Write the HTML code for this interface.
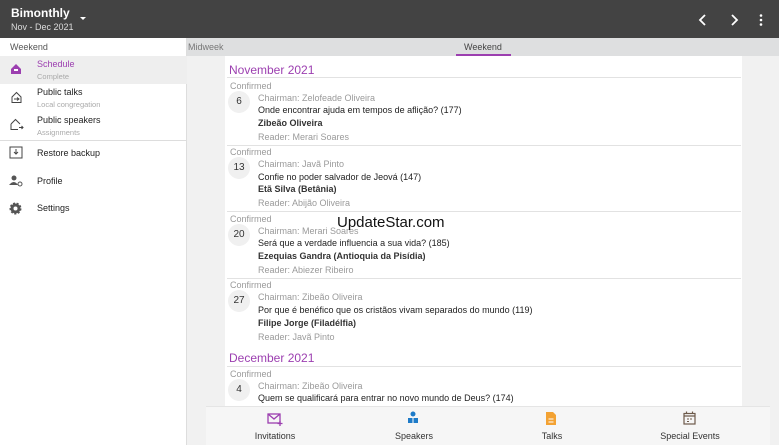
<!DOCTYPE html><html><head><style>
*{margin:0;padding:0;box-sizing:border-box}
body{width:779px;height:445px;overflow:hidden;background:#f1f1f1;font-family:"Liberation Sans",sans-serif;position:relative}
.a{position:absolute;white-space:nowrap}
.top{left:0;top:0;width:779px;height:38px;background:#434343}
.side{left:0;top:38px;width:187px;height:407px;background:#fff;border-right:1px solid #ddd}
.tabs{left:187px;top:38px;width:592px;height:18px;background:#dedfe0}
.card{left:225px;top:56px;width:517px;height:350px;background:#fff}
.g{color:#9a9a9a;font-size:9px}
.t{color:#222;font-size:9px}
.b{color:#333;font-size:9px;font-weight:bold}
.circ{width:22px;height:22px;border-radius:50%;background:#f0f0f0;font-size:10px;color:#333;text-align:center;line-height:22px}
.sep{height:1px;background:#e2e2e2;left:227px;width:514px}
.mon{color:#9c3fb0;font-size:12px;left:229px}
.nav{left:206px;top:406px;width:564px;height:39px;background:#f6f6f6;border-top:1px solid #e5e5e5}
.nl{font-size:9px;color:#333;top:431px;transform:translateX(-50%)}
.si{font-size:9px;color:#222;left:37px}
.ss{font-size:7.5px;color:#aaa;left:37px}
</style></head><body>
<div class="a top"></div>
<div class="a" style="left:11px;top:6px;color:#fff;font-size:12px;font-weight:bold">Bimonthly</div>
<div class="a" style="left:11px;top:22px;color:#ddd;font-size:9px">Nov - Dec 2021</div>
<div class="a" style="left:80px;top:17px;width:0;height:0;border-left:3px solid transparent;border-right:3px solid transparent;border-top:3px solid #fff"></div>
<svg class="a" style="left:695px;top:13px" width="80" height="14"><path d="M10 2 L5 7 L10 12" stroke="#fff" stroke-width="1.8" fill="none"/><path d="M37 2 L42 7 L37 12" stroke="#fff" stroke-width="1.8" fill="none"/><circle cx="66" cy="2.5" r="1.3" fill="#fff"/><circle cx="66" cy="7" r="1.3" fill="#fff"/><circle cx="66" cy="11.5" r="1.3" fill="#fff"/></svg>
<div class="a side"></div>
<div class="a" style="left:10px;top:42px;font-size:9px;color:#555">Weekend</div>
<div class="a" style="left:0;top:56px;width:187px;height:28px;background:#eee"></div>
<svg class="a" style="left:10px;top:63px" width="12" height="12"><path d="M6 1 L11 6 V11 H1 V6 Z" fill="#9c3fb0"/><rect x="4" y="6" width="4" height="2" fill="#fff"/></svg>
<div class="a si" style="top:59px;color:#9c3fb0">Schedule</div>
<div class="a ss" style="top:72px">Complete</div>
<svg class="a" style="left:10px;top:91px" width="13" height="13" fill="none" stroke="#444" stroke-width="1"><path d="M2 6 L6.5 1.5 L11 6 V11.5 H2 Z"/><path d="M4 8 H9 M7 6.5 L9 8 L7 9.5"/></svg>
<div class="a si" style="top:87px">Public talks</div>
<div class="a ss" style="top:100px">Local congregation</div>
<svg class="a" style="left:9px;top:118px" width="15" height="13" fill="none" stroke="#444" stroke-width="1"><path d="M2 6 L6.5 1.5 L11 6 M2 6 V11.5 H9 M10 9.5 H14 M12.5 8 L14 9.5 L12.5 11"/></svg>
<div class="a si" style="top:115px">Public speakers</div>
<div class="a ss" style="top:128px">Assignments</div>
<div class="a" style="left:0;top:140px;width:187px;height:1px;background:#ddd"></div>
<svg class="a" style="left:9px;top:146px" width="14" height="13" fill="none" stroke="#444" stroke-width="1"><rect x="1" y="1" width="12" height="11"/><path d="M7 3 V8 M5 6 L7 8 L9 6"/></svg>
<div class="a si" style="top:148px">Restore backup</div>
<svg class="a" style="left:9px;top:175px" width="14" height="12"><circle cx="5" cy="3" r="2.5" fill="#555"/><path d="M0 10 Q5 4 9 10 Z" fill="#555"/><circle cx="11" cy="9" r="2" fill="none" stroke="#555" stroke-width="1"/></svg>
<div class="a si" style="top:176px">Profile</div>
<svg class="a" style="left:9px;top:202px" width="13" height="13"><circle cx="6.5" cy="6.5" r="5" fill="#555" stroke="#555" stroke-width="2" stroke-dasharray="2 1.5"/><circle cx="6.5" cy="6.5" r="2" fill="#fff"/></svg>
<div class="a si" style="top:203px">Settings</div>
<div class="a tabs"></div>
<div class="a" style="left:188px;top:42px;font-size:9px;color:#777">Midweek</div>
<div class="a" style="left:464px;top:42px;font-size:9px;color:#444">Weekend</div>
<div class="a" style="left:456px;top:54px;width:55px;height:2px;background:#9c3fb0"></div>
<div class="a card"></div>
<div class="a mon" style="top:63px">November 2021</div>
<div class="a sep" style="top:77px"></div>
<div class="a g" style="left:230px;top:81px">Confirmed</div>
<div class="a circ" style="left:228px;top:91px">6</div>
<div class="a g" style="left:258px;top:93px">Chairman: Zelofeade Oliveira</div>
<div class="a t" style="left:258px;top:105px">Onde encontrar ajuda em tempos de aflição? (177)</div>
<div class="a b" style="left:258px;top:118px">Zibeão Oliveira</div>
<div class="a g" style="left:258px;top:132px">Reader: Merari Soares</div>
<div class="a sep" style="top:145px"></div>
<div class="a g" style="left:230px;top:147px">Confirmed</div>
<div class="a circ" style="left:228px;top:157px">13</div>
<div class="a g" style="left:258px;top:159px">Chairman: Javã Pinto</div>
<div class="a t" style="left:258px;top:172px">Confie no poder salvador de Jeová (147)</div>
<div class="a b" style="left:258px;top:184px">Etã Silva (Betânia)</div>
<div class="a g" style="left:258px;top:198px">Reader: Abijão Oliveira</div>
<div class="a sep" style="top:211px"></div>
<div class="a g" style="left:230px;top:214px">Confirmed</div>
<div class="a circ" style="left:228px;top:224px">20</div>
<div class="a g" style="left:258px;top:226px">Chairman: Merari Soares</div>
<div class="a t" style="left:258px;top:238px">Será que a verdade influencia a sua vida? (185)</div>
<div class="a b" style="left:258px;top:251px">Ezequias Gandra (Antioquia da Pisídia)</div>
<div class="a g" style="left:258px;top:265px">Reader: Abiezer Ribeiro</div>
<div class="a sep" style="top:278px"></div>
<div class="a g" style="left:230px;top:280px">Confirmed</div>
<div class="a circ" style="left:228px;top:290px">27</div>
<div class="a g" style="left:258px;top:292px">Chairman: Zibeão Oliveira</div>
<div class="a t" style="left:258px;top:305px">Por que é benéfico que os cristãos vivam separados do mundo (119)</div>
<div class="a b" style="left:258px;top:318px">Filipe Jorge (Filadélfia)</div>
<div class="a g" style="left:258px;top:332px">Reader: Javã Pinto</div>
<div class="a mon" style="top:351px">December 2021</div>
<div class="a sep" style="top:366px"></div>
<div class="a g" style="left:230px;top:369px">Confirmed</div>
<div class="a circ" style="left:228px;top:379px">4</div>
<div class="a g" style="left:258px;top:381px">Chairman: Zibeão Oliveira</div>
<div class="a t" style="left:258px;top:393px">Quem se qualificará para entrar no novo mundo de Deus? (174)</div>
<div class="a" style="left:337px;top:214px;font-size:15px;color:#111">UpdateStar.com</div>
<div class="a nav"></div>
<svg class="a" style="left:267px;top:412px" width="16" height="14" fill="none" stroke="#9c3fb0" stroke-width="1.3"><rect x="1" y="2" width="12" height="9"/><path d="M1 2 L7 7 L13 2"/><path d="M13 9 V14 M10.5 11.5 H15.5"/></svg>
<div class="a nl" style="left:275px">Invitations</div>
<svg class="a" style="left:407px;top:411px" width="12" height="13"><circle cx="6" cy="3" r="2.5" fill="#1e7bc8"/><rect x="1" y="7" width="10" height="5" fill="#1e7bc8"/><rect x="5.5" y="7" width="1" height="5" fill="#fff"/></svg>
<div class="a nl" style="left:414px">Speakers</div>
<svg class="a" style="left:545px;top:411px" width="12" height="15"><path d="M1 1 H8 L11 4 V14 H1 Z" fill="#f3a233"/><path d="M3.5 8 H8.5 M3.5 11 H8.5" stroke="#fff"/></svg>
<div class="a nl" style="left:552px">Talks</div>
<svg class="a" style="left:683px;top:411px" width="13" height="14" fill="none" stroke="#6d5a4b" stroke-width="1.2"><rect x="1" y="2.5" width="11" height="10.5"/><path d="M3.5 0.5 V3 M9.5 0.5 V3 M1 5 H12"/><path d="M4 8 H6 M7 8 H9 M4 10.5 H6" stroke-width="1"/></svg>
<div class="a nl" style="left:690px">Special Events</div>
</body></html>
